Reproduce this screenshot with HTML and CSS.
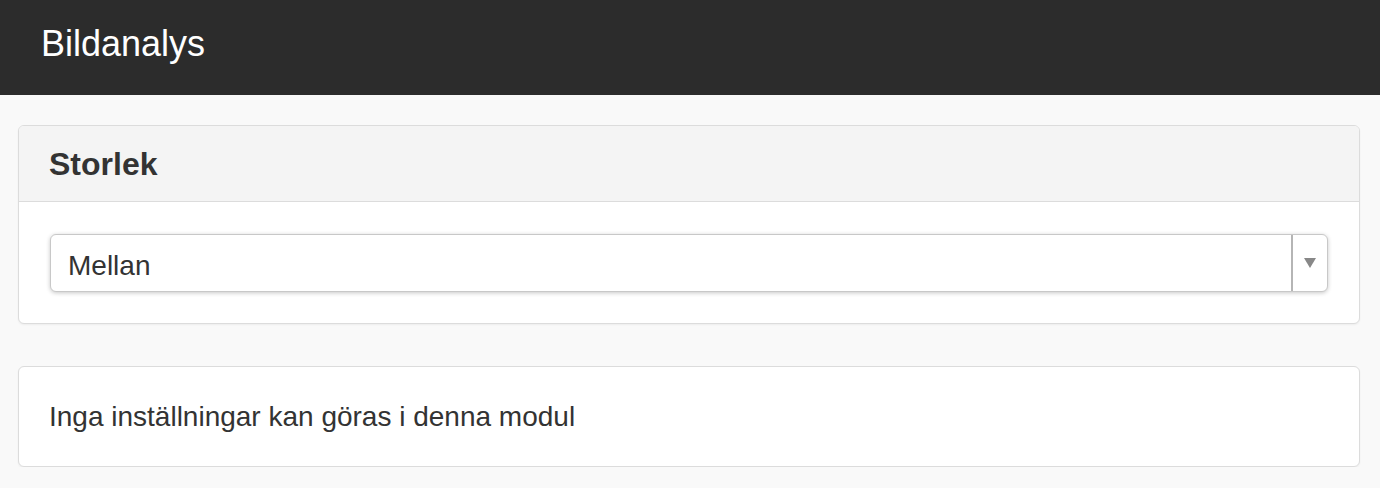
FILE: index.html
```html
<!DOCTYPE html>
<html lang="sv">
<head>
<meta charset="utf-8">
<title>Bildanalys</title>
<link rel="stylesheet" href="styles.css">
</head>
<body>
<header class="topbar">
  <h1 class="topbar-title">Bildanalys</h1>
</header>
<main class="content">
  <section class="panel">
    <div class="panel-heading">
      <h2 class="panel-title">Storlek</h2>
    </div>
    <div class="panel-body">
      <div class="select">
        <span class="select-value">Mellan</span>
        <span class="select-arrow">
          <svg width="12" height="10" viewBox="0 0 12 10"><path d="M0 0H12L6 10Z" fill="#888"/></svg>
        </span>
      </div>
    </div>
  </section>
  <section class="panel panel-note">
    <p class="note-text">Inga inställningar kan göras i denna modul</p>
  </section>
</main>
</body>
</html>
```

FILE: styles.css
```css
* { box-sizing: border-box; }
html, body {
  margin: 0;
  padding: 0;
  background: #f9f9f9;
  font-family: "Liberation Sans", Arial, Helvetica, sans-serif;
  color: #333;
}
.topbar {
  height: 95px;
  background: #2c2c2c;
  padding: 26px 41px 0;
}
.topbar-title {
  margin: 0;
  font-size: 36px;
  line-height: 36px;
  font-weight: normal;
  color: #fff;
}
.content {
  padding: 30px 20px 0 18px;
}
.panel {
  background: #fff;
  border: 1px solid #dcdcdc;
  border-radius: 6px;
  box-shadow: 0 1px 2px rgba(0,0,0,0.05);
  overflow: hidden;
}
.panel-heading {
  background: #f4f4f4;
  border-bottom: 1px solid #dcdcdc;
  padding: 22px 30px 21px;
}
.panel-title {
  margin: 0;
  font-size: 32px;
  line-height: 32px;
  font-weight: bold;
  color: #333;
}
.panel-body {
  padding: 32px 31px 31px;
}
.select {
  display: flex;
  height: 58px;
  border: 1px solid #c8c8c8;
  border-radius: 6px;
  background: #fff;
  box-shadow: 0 1px 4px rgba(0,0,0,0.22);
}
.select-value {
  flex: 1;
  display: flex;
  align-items: center;
  padding: 5px 17px 0;
  font-size: 28px;
  color: #333;
}
.select-arrow {
  width: 36px;
  border-left: 2px solid #b5b5b5;
  display: flex;
  align-items: center;
  justify-content: center;
  padding-bottom: 1px;
}
.panel-note {
  margin-top: 42px;
}
.note-text {
  margin: 0;
  padding: 36px 30px 35px;
  font-size: 28px;
  line-height: 28px;
  color: #333;
}
```
